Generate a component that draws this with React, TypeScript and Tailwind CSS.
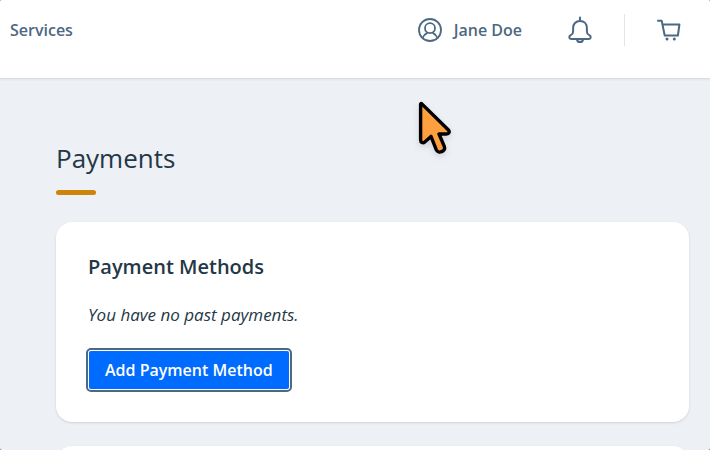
function UserIcon() {
  return (
    <svg className="size-6" viewBox="0 0 24 24" fill="none" stroke="currentColor" strokeWidth="1.8" aria-hidden="true">
      <circle cx="12" cy="12" r="11" />
      <circle cx="12" cy="10.2" r="5" />
      <path d="M4.6 20c.8-2.600 2.400-4 4.900-5.400M19.400 20c-.8-2.600-2.400-4-4.900-5.400" />
    </svg>
  );
}

function BellIcon() {
  return (
    <svg className="h-7 w-6" viewBox="0 0 24 28" fill="none" stroke="currentColor" strokeWidth="2" strokeLinecap="round" strokeLinejoin="round" aria-hidden="true">
      <path d="M12 1.600v3.400" />
      <path d="M12 5c-4.200 0-6.900 3-6.900 7v3.800c0 1.700-.8 2.600-2.300 3.300-2.200 1-2 3.900.4 3.900h17.600c2.400 0 2.600-2.900.4-3.900-1.500-.7-2.300-1.600-2.300-3.300V12c0-4-2.700-7-6.900-7z" />
      <path d="M9 23.400c.2 3.600 5.800 3.600 6 0" />
    </svg>
  );
}

function CartIcon() {
  return (
    <svg className="size-6" viewBox="0 0 24 24" fill="none" stroke="currentColor" strokeWidth="2" strokeLinejoin="round" aria-hidden="true">
      <path d="M.2 2.700h4.500l3 14.800h13.200l1.500-11H5.500" />
      <circle cx="10" cy="21.100" r="1.500" fill="currentColor" stroke="none" />
      <circle cx="17.300" cy="21.100" r="1.500" fill="currentColor" stroke="none" />
    </svg>
  );
}

function Pointer() {
  return (
    <svg
      className="pointer-events-none absolute top-[98px] left-[414px] h-16 w-11 drop-shadow-md"
      viewBox="0 0 44 64"
      fill="#ffa040"
      stroke="#000"
      strokeWidth="3.400"
      strokeLinejoin="round"
      aria-hidden="true"
    >
      <path d="M7.600 5.600c-.5-.4-1 0-1 .7V42c0 2.500 2.300 3.600 4.200 1.900l6.200-5.500 5.300 13.500c1.900 4.300 9.700 1.500 8.100-3.200L25 36h7.500c2.500 0 3.600-2.300 1.700-4.200z" />
    </svg>
  );
}

function Header() {
  return (
    <header className="border-b border-[#d5dde2] bg-white pb-[18px] text-[#4d6882] shadow-xs">
      <nav className="flex h-[60px] items-center justify-between pr-[29px] pl-[10px] font-semibold">
        <a href="#services">Services</a>
        <div className="flex items-center">
          <a href="#account" className="flex items-center gap-3">
            <UserIcon />
            Jane Doe
          </a>
          <button type="button" aria-label="Notifications" className="ml-[46px]">
            <BellIcon />
          </button>
          <span className="mx-8 h-8 w-px bg-[#e2e5e8]" />
          <a href="#cart" aria-label="Cart">
            <CartIcon />
          </a>
        </div>
      </nav>
    </header>
  );
}

export default function App() {
  return (
    <div className="h-screen bg-[#777]">
      <div className="relative h-full overflow-hidden rounded-xs bg-[#edf0f5] font-['Open_Sans',sans-serif] text-base text-[#243746]">
        <Header />

        <main className="pt-[63px] pr-[21px] pl-14">
          <h1 className="text-[26px] leading-8">Payments</h1>
          <div className="mt-4 h-[5px] w-10 rounded-full bg-[#cc850a]" />

          <section className="mt-[27px] rounded-2xl bg-white px-8 py-[33px] shadow-sm">
            <h2 className="text-xl leading-6 font-semibold">Payment Methods</h2>
            <p className="mt-6 text-[17px] leading-6 italic">You have no past payments.</p>
            <button
              type="button"
              className="mt-6 ml-px h-[38px] rounded-xs bg-[#006bff] px-4 font-semibold text-white outline-2 outline-offset-1 outline-[#4d6882]"
            >
              Add Payment Method
            </button>
          </section>

          <section className="mt-6 h-48 rounded-2xl bg-white shadow-sm" />
        </main>

        <Pointer />
      </div>
    </div>
  );
}
